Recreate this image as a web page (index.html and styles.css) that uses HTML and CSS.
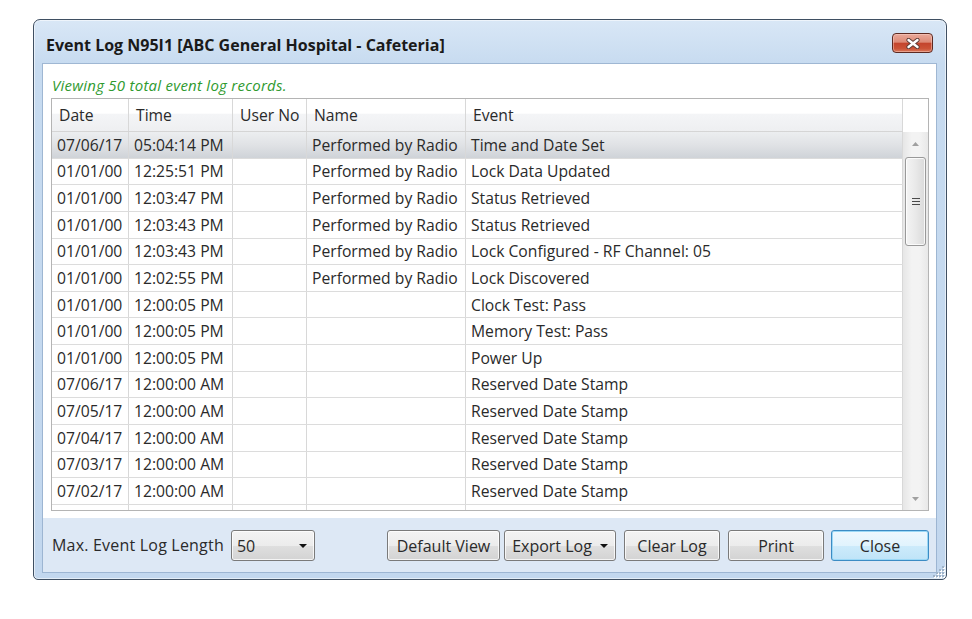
FILE: index.html
```html
<!DOCTYPE html>
<html lang="en">
<head>
  <meta charset="UTF-8">
  <title>Event Log N95I1</title>
  <link rel="stylesheet" href="styles.css">
</head>
<body>
  <div class="window">
    <div class="titlebar">
      <span class="title">Event Log N95I1 [ABC General Hospital - Cafeteria]</span>
      <button class="close-x" aria-label="Close">
        <svg width="14" height="11" viewBox="0 0 14 11">
          <path d="M2.5 2 L11.5 9 M11.5 2 L2.5 9" stroke="#5b3b36" stroke-width="4.2" stroke-linecap="round"/>
          <path d="M2.5 2 L11.5 9 M11.5 2 L2.5 9" stroke="#fff" stroke-width="2.4" stroke-linecap="round"/>
        </svg>
      </button>
    </div>

    <div class="client">
      <div class="content">
        <p class="summary">Viewing 50 total event log records.</p>

        <div class="grid">
          <div class="grid-body">
            <div class="row head">
              <div class="cell">Date</div>
              <div class="cell">Time</div>
              <div class="cell">User No</div>
              <div class="cell">Name</div>
              <div class="cell">Event</div>
            </div>
            <div class="row selected">
              <div class="cell">07/06/17</div><div class="cell">05:04:14 PM</div><div class="cell"></div><div class="cell">Performed by Radio</div><div class="cell">Time and Date Set</div>
            </div>
            <div class="row">
              <div class="cell">01/01/00</div><div class="cell">12:25:51 PM</div><div class="cell"></div><div class="cell">Performed by Radio</div><div class="cell">Lock Data Updated</div>
            </div>
            <div class="row">
              <div class="cell">01/01/00</div><div class="cell">12:03:47 PM</div><div class="cell"></div><div class="cell">Performed by Radio</div><div class="cell">Status Retrieved</div>
            </div>
            <div class="row">
              <div class="cell">01/01/00</div><div class="cell">12:03:43 PM</div><div class="cell"></div><div class="cell">Performed by Radio</div><div class="cell">Status Retrieved</div>
            </div>
            <div class="row">
              <div class="cell">01/01/00</div><div class="cell">12:03:43 PM</div><div class="cell"></div><div class="cell">Performed by Radio</div><div class="cell">Lock Configured - RF Channel: 05</div>
            </div>
            <div class="row">
              <div class="cell">01/01/00</div><div class="cell">12:02:55 PM</div><div class="cell"></div><div class="cell">Performed by Radio</div><div class="cell">Lock Discovered</div>
            </div>
            <div class="row">
              <div class="cell">01/01/00</div><div class="cell">12:00:05 PM</div><div class="cell"></div><div class="cell"></div><div class="cell">Clock Test: Pass</div>
            </div>
            <div class="row">
              <div class="cell">01/01/00</div><div class="cell">12:00:05 PM</div><div class="cell"></div><div class="cell"></div><div class="cell">Memory Test: Pass</div>
            </div>
            <div class="row">
              <div class="cell">01/01/00</div><div class="cell">12:00:05 PM</div><div class="cell"></div><div class="cell"></div><div class="cell">Power Up</div>
            </div>
            <div class="row">
              <div class="cell">07/06/17</div><div class="cell">12:00:00 AM</div><div class="cell"></div><div class="cell"></div><div class="cell">Reserved Date Stamp</div>
            </div>
            <div class="row">
              <div class="cell">07/05/17</div><div class="cell">12:00:00 AM</div><div class="cell"></div><div class="cell"></div><div class="cell">Reserved Date Stamp</div>
            </div>
            <div class="row">
              <div class="cell">07/04/17</div><div class="cell">12:00:00 AM</div><div class="cell"></div><div class="cell"></div><div class="cell">Reserved Date Stamp</div>
            </div>
            <div class="row">
              <div class="cell">07/03/17</div><div class="cell">12:00:00 AM</div><div class="cell"></div><div class="cell"></div><div class="cell">Reserved Date Stamp</div>
            </div>
            <div class="row">
              <div class="cell">07/02/17</div><div class="cell">12:00:00 AM</div><div class="cell"></div><div class="cell"></div><div class="cell">Reserved Date Stamp</div>
            </div>
            <!-- next row is scrolled mostly out of view -->
            <div class="row">
              <div class="cell"></div><div class="cell"></div><div class="cell"></div><div class="cell"></div><div class="cell"></div>
            </div>
          </div>

          <div class="vscroll">
            <div class="corner"></div>
            <div class="track">
              <div class="arrow-btn">
                <svg width="7" height="4" viewBox="0 0 7 4"><path d="M0 4 L3.5 0 L7 4 Z" fill="#a0a0a0"/></svg>
              </div>
              <div class="thumb">
                <svg width="8" height="7" viewBox="0 0 8 7">
                  <path d="M0 0.5 H8 M0 3.5 H8 M0 6.5 H8" stroke="#4a4a4a" stroke-width="1"/>
                </svg>
              </div>
              <div class="track-fill"></div>
              <div class="arrow-btn">
                <svg width="7" height="4" viewBox="0 0 7 4"><path d="M0 0 L7 0 L3.5 4 Z" fill="#a0a0a0"/></svg>
              </div>
            </div>
          </div>
        </div>
      </div>

      <div class="actions">
        <label class="length-label" for="maxLength">Max. Event Log Length</label>
        <div class="combo" id="maxLength">
          <span>50</span>
          <svg width="8" height="4" viewBox="0 0 8 4"><path d="M0 0 L8 0 L4 4 Z" fill="#111"/></svg>
        </div>
        <div class="buttons">
          <button class="btn btn-default-view">Default View</button>
          <button class="btn btn-export">Export Log
            <svg width="8" height="4" viewBox="0 0 8 4"><path d="M0 0 L8 0 L4 4 Z" fill="#111"/></svg>
          </button>
          <button class="btn btn-clear">Clear Log</button>
          <button class="btn btn-print">Print</button>
          <button class="btn btn-close">Close</button>
        </div>
      </div>
    </div>

    <svg class="size-grip" width="12" height="12" viewBox="0 0 12 12">
      <g fill="#fff">
        <rect x="10" y="1" width="2" height="2"/>
        <rect x="7" y="4" width="2" height="2"/><rect x="10" y="4" width="2" height="2"/>
        <rect x="4" y="7" width="2" height="2"/><rect x="7" y="7" width="2" height="2"/><rect x="10" y="7" width="2" height="2"/>
        <rect x="1" y="10" width="2" height="2"/><rect x="4" y="10" width="2" height="2"/><rect x="7" y="10" width="2" height="2"/><rect x="10" y="10" width="2" height="2"/>
      </g>
      <g fill="#9fb3c8">
        <rect x="9" y="0" width="2" height="2"/>
        <rect x="6" y="3" width="2" height="2"/><rect x="9" y="3" width="2" height="2"/>
        <rect x="3" y="6" width="2" height="2"/><rect x="6" y="6" width="2" height="2"/><rect x="9" y="6" width="2" height="2"/>
        <rect x="0" y="9" width="2" height="2"/><rect x="3" y="9" width="2" height="2"/><rect x="6" y="9" width="2" height="2"/><rect x="9" y="9" width="2" height="2"/>
      </g>
    </svg>
  </div>
</body>
</html>
```

FILE: styles.css
```css
body {
  margin: 0;
  background: #fff;
  font-family: "Open Sans", "Noto Sans", sans-serif;
  color: #2a2a2a;
}
.window {
  position: relative;
  box-sizing: border-box;
  width: 914px;
  height: 561px;
  margin: 19px 0 0 33px;
  padding: 0 10px 7px 9px;
  border: 1px solid #3f4f62;
  border-radius: 7px 7px 5px 5px;
  background: linear-gradient(#d9e7f6, #c7dbf0 44px, #c2d7ee);
  box-shadow: inset 0 0 0 1px rgba(255, 255, 255, 0.55);
  display: flex;
  flex-direction: column;
}
.titlebar {
  box-sizing: border-box;
  height: 44px;
  padding: 13px 3px 0 3px;
  display: flex;
  justify-content: space-between;
  align-items: flex-start;
}
.title {
  margin-top: 1px;
  font-size: 16px;
  line-height: 22px;
  font-weight: 700;
  color: #1a1a1a;
}
.close-x {
  box-sizing: border-box;
  width: 41px;
  height: 20px;
  padding: 0;
  border: 1px solid #5d2a22;
  border-radius: 4px;
  background: linear-gradient(#e9a99b 0%, #dd8a76 45%, #c4452d 52%, #cb5236 80%, #d9785c 100%);
  box-shadow: inset 0 0 0 1px rgba(255, 215, 205, 0.45);
  display: flex;
  align-items: center;
  justify-content: center;
}

/* client area */
.client {
  flex: 1;
  display: flex;
  flex-direction: column;
  box-shadow: 0 0 0 1px rgba(110, 140, 175, 0.45);
}
.content {
  box-sizing: border-box;
  height: 454px;
  padding: 12px 7px 0 8px;
  background: #fff;
}
.summary {
  margin: 0 0 3px;
  padding-left: 1px;
  font-size: 15px;
  line-height: 19px;
  letter-spacing: 0.25px;
  font-style: italic;
  color: #2f9a2f;
}

/* data grid */
.grid {
  box-sizing: border-box;
  height: 413px;
  display: flex;
  border: 1px solid #b4b4b4;
  overflow: hidden;
}
.grid-body {
  flex: 1;
}
.row {
  box-sizing: border-box;
  height: 26.64px;
  display: grid;
  grid-template-columns: 77px 104px 74px 159px 1fr;
  border-bottom: 1px solid #dcdcdc;
}
.row.head {
  height: 33px;
  border-bottom-color: #d5d5d5;
  background: linear-gradient(#ffffff 0%, #ffffff 45%, #f4f5f7 46%, #eeeff1 100%);
}
.row.selected {
  background: linear-gradient(#eceef0 0%, #e0e2e5 50%, #cfd3d8 100%);
}
.cell {
  padding: 0 5px;
  border-right: 1px solid #d8d8d8;
  display: flex;
  align-items: center;
  font-size: 15.7px;
  line-height: 20px;
  white-space: nowrap;
  overflow: hidden;
}
.head .cell {
  padding-left: 7px;
}

/* vertical scrollbar */
.vscroll {
  width: 25px;
  display: flex;
  flex-direction: column;
}
.vscroll .corner {
  height: 33px;
  background: #fff;
}
.track {
  flex: 1;
  display: flex;
  flex-direction: column;
  align-items: center;
  background: linear-gradient(90deg, #e6e6e6, #f3f3f3 35%, #f3f3f3 65%, #e8e8e8);
}
.arrow-btn {
  height: 23px;
  display: flex;
  align-items: center;
  justify-content: center;
}
.thumb {
  box-sizing: border-box;
  width: 21px;
  height: 89px;
  margin-top: 2px;
  border: 1px solid #999;
  border-radius: 3px;
  background: linear-gradient(90deg, #f4f4f4, #e9e9e9 50%, #dadada);
  box-shadow: inset 0 0 0 1px rgba(255, 255, 255, 0.8);
  display: flex;
  align-items: center;
  justify-content: center;
}
.track-fill {
  flex: 1;
}

/* bottom bar */
.actions {
  flex: 1;
  padding: 12px 7px 0 9px;
  display: flex;
  align-items: flex-start;
  background: #dde8f5;
}
.length-label {
  font-size: 16px;
  line-height: 31px;
  letter-spacing: 0.2px;
}
.combo {
  box-sizing: border-box;
  width: 84px;
  height: 31px;
  margin-left: 7px;
  padding: 0 7px 0 5px;
  border: 1px solid #7a7a7a;
  border-radius: 3px;
  background: linear-gradient(#f3f3f3 0%, #ececec 50%, #dfdfdf 51%, #d3d3d3 100%);
  box-shadow: inset 0 0 0 1px rgba(255, 255, 255, 0.75);
  display: flex;
  align-items: center;
  justify-content: space-between;
  font-size: 16px;
}
.buttons {
  margin-left: auto;
  display: flex;
}
.btn {
  box-sizing: border-box;
  height: 31px;
  padding: 0;
  border: 1px solid #7a7a7a;
  border-radius: 3px;
  background: linear-gradient(#f3f3f3 0%, #ececec 50%, #dfdfdf 51%, #d3d3d3 100%);
  box-shadow: inset 0 0 0 1px rgba(255, 255, 255, 0.75);
  font-family: inherit;
  font-size: 16px;
  color: #2a2a2a;
  display: flex;
  align-items: center;
  justify-content: center;
  gap: 8px;
}
.btn-default-view { width: 113px; }
.btn-export { width: 112px; margin-left: 4px; }
.btn-clear { width: 96px; margin-left: 8px; }
.btn-print { width: 96px; margin-left: 8px; }
.btn-close {
  width: 98px;
  margin-left: 7px;
  border-color: #3c8cc4;
  background: linear-gradient(#eef8fe 0%, #e1f3fd 50%, #cdebfb 51%, #bfe4f8 100%);
  box-shadow: inset 0 0 0 1px #9bd8f6;
}
.size-grip {
  position: absolute;
  right: 1px;
  bottom: 1px;
}
```
